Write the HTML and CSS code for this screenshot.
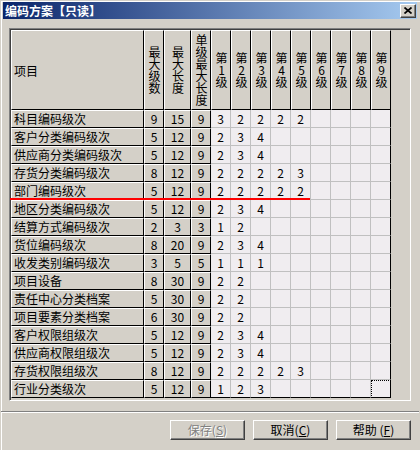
FILE: index.html
```html
<!DOCTYPE html>
<html lang="zh-CN">
<head>
<meta charset="utf-8">
<title>编码方案【只读】</title>
<link rel="stylesheet" href="styles.css">
</head>
<body>
<div class="window">
  <div class="titlebar">
    <span class="title">编码方案<span class="br">【</span>只读<span class="br">】</span></span>
    <span class="close"><svg width="8" height="7" viewBox="0 0 8 7"><path d="M0.5 0.5 L7.5 6.5 M7.5 0.5 L0.5 6.5" stroke="#000" stroke-width="1.7" fill="none"/></svg></span>
  </div>
  <div class="frame">
    <div class="grid">
      <div class="h n">项目</div>
      <div class="h"><span class="vt">最大级数</span></div>
      <div class="h"><span class="vt">最大长度</span></div>
      <div class="h"><span class="vt">单级最大长度</span></div>
      <div class="h"><span class="vt">第1级</span></div>
      <div class="h"><span class="vt">第2级</span></div>
      <div class="h"><span class="vt">第3级</span></div>
      <div class="h"><span class="vt">第4级</span></div>
      <div class="h"><span class="vt">第5级</span></div>
      <div class="h"><span class="vt">第6级</span></div>
      <div class="h"><span class="vt">第7级</span></div>
      <div class="h"><span class="vt">第8级</span></div>
      <div class="h"><span class="vt">第9级</span></div>

      <div class="f n">科目编码级次</div><div class="f">9</div><div class="f">15</div><div class="f">9</div>
      <div class="c">3</div><div class="c">2</div><div class="c">2</div><div class="c">2</div><div class="c">2</div><div class="c"></div><div class="c"></div><div class="c"></div><div class="c"></div>

      <div class="f n">客户分类编码级次</div><div class="f">5</div><div class="f">12</div><div class="f">9</div>
      <div class="c">2</div><div class="c">3</div><div class="c">4</div><div class="c"></div><div class="c"></div><div class="c"></div><div class="c"></div><div class="c"></div><div class="c"></div>

      <div class="f n">供应商分类编码级次</div><div class="f">5</div><div class="f">12</div><div class="f">9</div>
      <div class="c">2</div><div class="c">3</div><div class="c">4</div><div class="c"></div><div class="c"></div><div class="c"></div><div class="c"></div><div class="c"></div><div class="c"></div>

      <div class="f n">存货分类编码级次</div><div class="f">8</div><div class="f">12</div><div class="f">9</div>
      <div class="c">2</div><div class="c">2</div><div class="c">2</div><div class="c">2</div><div class="c">3</div><div class="c"></div><div class="c"></div><div class="c"></div><div class="c"></div>

      <div class="f n">部门编码级次</div><div class="f">5</div><div class="f">12</div><div class="f">9</div>
      <div class="c">2</div><div class="c">2</div><div class="c">2</div><div class="c">2</div><div class="c">2</div><div class="c"></div><div class="c"></div><div class="c"></div><div class="c"></div>

      <div class="f n">地区分类编码级次</div><div class="f">5</div><div class="f">12</div><div class="f">9</div>
      <div class="c">2</div><div class="c">3</div><div class="c">4</div><div class="c"></div><div class="c"></div><div class="c"></div><div class="c"></div><div class="c"></div><div class="c"></div>

      <div class="f n">结算方式编码级次</div><div class="f">2</div><div class="f">3</div><div class="f">3</div>
      <div class="c">1</div><div class="c">2</div><div class="c"></div><div class="c"></div><div class="c"></div><div class="c"></div><div class="c"></div><div class="c"></div><div class="c"></div>

      <div class="f n">货位编码级次</div><div class="f">8</div><div class="f">20</div><div class="f">9</div>
      <div class="c">2</div><div class="c">3</div><div class="c">4</div><div class="c"></div><div class="c"></div><div class="c"></div><div class="c"></div><div class="c"></div><div class="c"></div>

      <div class="f n">收发类别编码级次</div><div class="f">3</div><div class="f">5</div><div class="f">5</div>
      <div class="c">1</div><div class="c">1</div><div class="c">1</div><div class="c"></div><div class="c"></div><div class="c"></div><div class="c"></div><div class="c"></div><div class="c"></div>

      <div class="f n">项目设备</div><div class="f">8</div><div class="f">30</div><div class="f">9</div>
      <div class="c">2</div><div class="c">2</div><div class="c"></div><div class="c"></div><div class="c"></div><div class="c"></div><div class="c"></div><div class="c"></div><div class="c"></div>

      <div class="f n">责任中心分类档案</div><div class="f">5</div><div class="f">30</div><div class="f">9</div>
      <div class="c">2</div><div class="c">2</div><div class="c"></div><div class="c"></div><div class="c"></div><div class="c"></div><div class="c"></div><div class="c"></div><div class="c"></div>

      <div class="f n">项目要素分类档案</div><div class="f">6</div><div class="f">30</div><div class="f">9</div>
      <div class="c">2</div><div class="c">2</div><div class="c"></div><div class="c"></div><div class="c"></div><div class="c"></div><div class="c"></div><div class="c"></div><div class="c"></div>

      <div class="f n">客户权限组级次</div><div class="f">5</div><div class="f">12</div><div class="f">9</div>
      <div class="c">2</div><div class="c">3</div><div class="c">4</div><div class="c"></div><div class="c"></div><div class="c"></div><div class="c"></div><div class="c"></div><div class="c"></div>

      <div class="f n">供应商权限组级次</div><div class="f">5</div><div class="f">12</div><div class="f">9</div>
      <div class="c">2</div><div class="c">3</div><div class="c">4</div><div class="c"></div><div class="c"></div><div class="c"></div><div class="c"></div><div class="c"></div><div class="c"></div>

      <div class="f n">存货权限组级次</div><div class="f">8</div><div class="f">12</div><div class="f">9</div>
      <div class="c">2</div><div class="c">2</div><div class="c">2</div><div class="c">2</div><div class="c">3</div><div class="c"></div><div class="c"></div><div class="c"></div><div class="c"></div>

      <div class="f n">行业分类级次</div><div class="f">5</div><div class="f">12</div><div class="f">9</div>
      <div class="c">1</div><div class="c">2</div><div class="c">3</div><div class="c"></div><div class="c"></div><div class="c"></div><div class="c"></div><div class="c"></div><div class="c focus"></div>
    </div>
    <div class="mark"></div>
  </div>
  <div class="sep"></div>
  <div class="buttons">
    <button class="btn disabled" type="button">保存(<u>S</u>)</button>
    <button class="btn" type="button">取消(<u>C</u>)</button>
    <button class="btn" type="button">帮助 (<u>F</u>)</button>
  </div>
</div>
</body>
</html>
```
FILE: styles.css
```css
* {
  box-sizing: border-box;
}

html,
body {
  margin: 0;
  padding: 0;
}

body {
  width: 420px;
  height: 450px;
  overflow: hidden;
  background: #d4d0c8;
  font-family: "Noto Sans CJK SC", "Liberation Sans", sans-serif;
  font-size: 12px;
  color: #000;
}

.window {
  width: 420px;
  height: 450px;
  padding: 2px 3px 0 3px;
  background: #d4d0c8;
  box-shadow: inset 1px 1px 0 #d4d0c8, inset 2px 2px 0 #ffffff;
}

.titlebar {
  height: 17px;
  display: flex;
  align-items: center;
  justify-content: space-between;
  padding: 0 1px 0 2px;
  background: linear-gradient(to right, #0a246a, #a6caf0);
}

.title {
  display: flex;
  color: #fff;
  font-weight: bold;
  font-size: 12px;
  line-height: 14px;
  white-space: nowrap;
}

.title .br {
  display: inline-block;
  width: 12px;
  text-align: center;
}

.close {
  width: 16px;
  height: 14px;
  display: flex;
  align-items: center;
  justify-content: center;
  background: #d4d0c8;
  border: 1px solid;
  border-color: #fff #404040 #404040 #fff;
  box-shadow: inset -1px -1px 0 #808080;
}

.close svg {
  display: block;
}

.frame {
  position: relative;
  margin: 9px 0 0 6px;
  width: 402px;
  height: 373px;
  border: 1px solid;
  border-color: #808080 #fff #fff #808080;
  padding: 1px;
  box-shadow: inset 1px 1px 0 #404040, inset -1px -1px 0 #d4d0c8;
}

.grid {
  display: grid;
  grid-template-columns: 133px 20px 27px 20px repeat(9, 20px);
  grid-template-rows: 80px repeat(16, 18px);
  width: max-content;
}

.h {
  display: flex;
  align-items: center;
  justify-content: center;
  background: #d4d0c8;
  border-top: 1px solid #fff;
  border-left: 1px solid #fff;
  border-right: 1px solid #000;
  border-bottom: 1px solid #000;
}

.h.n {
  justify-content: flex-start;
  padding-left: 2px;
}

.vt {
  display: block;
  writing-mode: vertical-rl;
  text-orientation: upright;
  font-size: 12px;
  line-height: 12px;
  white-space: nowrap;
}

.f {
  background: #d4d0c8;
  border-top: 1px solid #fff;
  border-left: 1px solid #fff;
  border-right: 1px solid #000;
  border-bottom: 1px solid #000;
  line-height: 16px;
  text-align: center;
  white-space: nowrap;
}

.f.n {
  text-align: left;
  padding-left: 2px;
}

.c {
  background: #f0edf0;
  border-right: 1px solid #c0c0c0;
  border-bottom: 1px solid #c0c0c0;
  padding-top: 1px;
  line-height: 16px;
  text-align: center;
}

.grid > .c:nth-child(13n) {
  border-right-color: #000;
}

.grid > .c:nth-last-child(-n+9) {
  border-bottom-color: #000;
}

.c.focus {
  outline: 1px dotted #000;
  outline-offset: -1px;
}

.mark {
  position: absolute;
  left: 0;
  top: 169px;
  width: 300px;
  height: 2px;
  background: #ff0000;
}

.sep {
  margin: 10px -2px 0 -2px;
  height: 2px;
  border-top: 1px solid #808080;
  border-bottom: 1px solid #fff;
}

.buttons {
  margin-top: 7px;
  display: flex;
  justify-content: flex-end;
  gap: 8px;
  padding-right: 6px;
}

.btn {
  width: 75px;
  height: 20px;
  padding: 0;
  margin: 0;
  display: flex;
  align-items: center;
  justify-content: center;
  background: #d4d0c8;
  border: 1px solid;
  border-color: #fff #404040 #404040 #fff;
  border-radius: 0;
  box-shadow: inset -1px -1px 0 #808080;
  font-family: "Noto Sans CJK SC", "Liberation Sans", sans-serif;
  font-size: 12px;
  line-height: 14px;
  color: #000;
}

.btn.disabled {
  color: #808080;
  text-shadow: 1px 1px 0 #fff;
}
```
